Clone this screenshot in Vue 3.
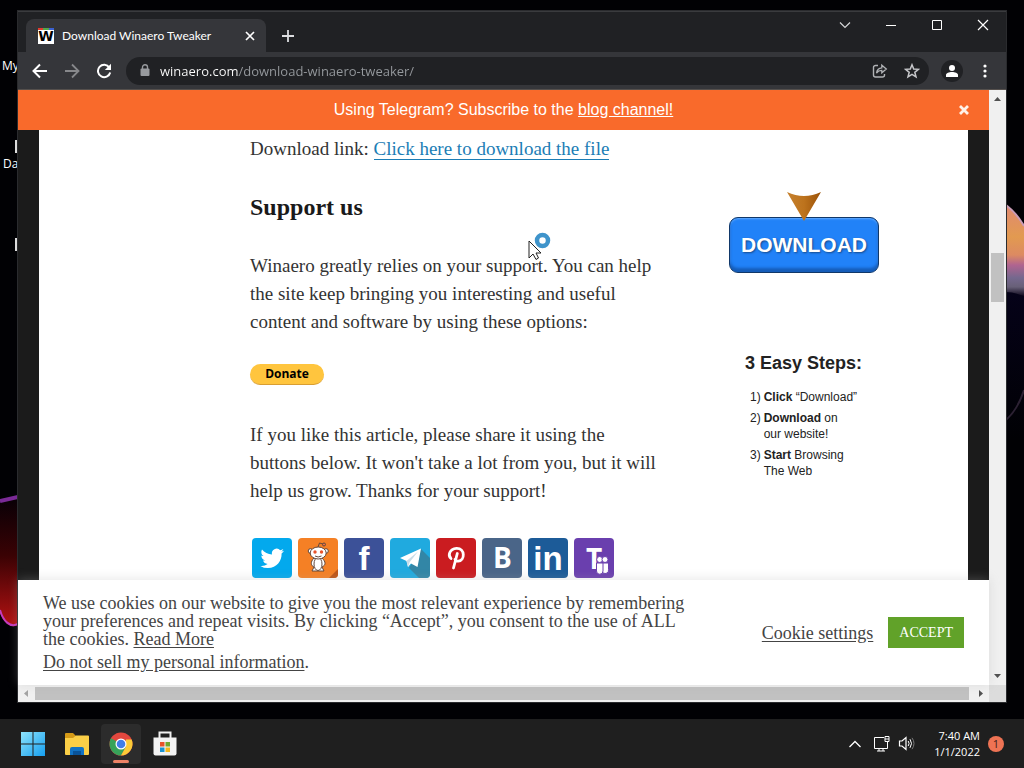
<script setup>
const lines = {
  support: [
    'Winaero greatly relies on your support. You can help',
    'the site keep bringing you interesting and useful',
    'content and software by using these options:'
  ],
  share: [
    'If you like this article, please share it using the',
    "buttons below. It won't take a lot from you, but it will",
    'help us grow. Thanks for your support!'
  ]
}
</script>

<template>
  <div class="desktop">
    <svg class="wall wall-left" width="18" height="140" viewBox="0 0 18 140" aria-hidden="true">
      <defs>
        <linearGradient id="ember" x1="0" y1="0" x2="0" y2="1">
          <stop offset="0" stop-color="#080006" />
          <stop offset="0.45" stop-color="#3a0204" />
          <stop offset="1" stop-color="#b51212" />
        </linearGradient>
      </defs>
      <path d="M0 8 18 6V133C11 137 4 131 0 121Z" fill="url(#ember)" />
      <path d="M0 9 18 5" stroke="#7a2a96" stroke-width="4" />
      <path d="M0 118C3 129 10 136 18 132" fill="none" stroke="#c23cc0" stroke-width="2" />
    </svg>
    <svg class="wall wall-right" width="18" height="240" viewBox="0 0 18 240" aria-hidden="true">
      <defs>
        <linearGradient id="petal" x1="0" y1="0" x2="0" y2="1">
          <stop offset="0" stop-color="#e08a72" />
          <stop offset="0.35" stop-color="#e29a50" />
          <stop offset="0.55" stop-color="#dc8a62" />
          <stop offset="0.66" stop-color="#b06490" />
          <stop offset="0.8" stop-color="#75688e" />
          <stop offset="0.9" stop-color="#686078" />
          <stop offset="1" stop-color="#100a1e" />
        </linearGradient>
        <linearGradient id="dusk" x1="0" y1="0" x2="0" y2="1">
          <stop offset="0" stop-color="#05021a" />
          <stop offset="1" stop-color="#010104" />
        </linearGradient>
      </defs>
      <path d="M0 80H18V240H0Z" fill="url(#dusk)" />
      <path d="M0 5C8 11 14 19 18 26V96C12 94 6 92 0 92Z" fill="url(#petal)" />
      <path d="M0 5C8 11 14 19 18 26" fill="none" stroke="#c99bb5" stroke-width="2" />
      <path d="M0 220C9 212 14 203 18 190" fill="none" stroke="#2c2133" stroke-width="2" />
    </svg>
    <span class="shortcut first">My</span>
    <i class="sliver upper"></i>
    <span class="shortcut second">Da</span>
    <i class="sliver lower"></i>

    <div class="workspace">
      <section class="window">
        <header class="tabstrip">
          <div class="tab">
            <svg width="16" height="16" viewBox="0 0 16 16" aria-hidden="true">
              <path d="M0 0H16V16H0Z" fill="#fff" />
              <path d="M0 0H5V2H0Z" fill="#e33b2e" /><path d="M5 0H11V2H5Z" fill="#52a74a" /><path d="M11 0H16V2H11Z" fill="#3b62d2" />
              <text x="8" y="13" text-anchor="middle" class="favicon-letter">W</text>
            </svg>
            <span class="tab-title">Download Winaero Tweaker</span>
            <button class="plain tab-close" aria-label="Close tab">
              <svg width="10" height="10" viewBox="0 0 10 10"><path d="M1 1 9 9M9 1 1 9" stroke="#fff" stroke-width="1.7" /></svg>
            </button>
          </div>
          <button class="plain new-tab" aria-label="New tab">
            <svg width="12" height="12" viewBox="0 0 12 12"><path d="M6 0V12M0 6H12" stroke="#dcdde0" stroke-width="1.8" /></svg>
          </button>
          <div class="captions">
            <button class="plain" aria-label="Search tabs"><svg width="12" height="12" viewBox="0 0 12 12"><path d="M1 3.500 6 8.500 11 3.500" fill="none" stroke="#d5d6d8" stroke-width="1.200" /></svg></button>
            <button class="plain" aria-label="Minimize"><svg width="12" height="12" viewBox="0 0 12 12"><path d="M1 6.500H11" stroke="#fff" /></svg></button>
            <button class="plain" aria-label="Maximize"><svg width="12" height="12" viewBox="0 0 12 12"><path d="M1.500 1.500H10.500V10.500H1.500Z" fill="none" stroke="#fff" /></svg></button>
            <button class="plain" aria-label="Close"><svg width="12" height="12" viewBox="0 0 12 12"><path d="M1 1 11 11M11 1 1 11" stroke="#fff" stroke-width="1.200" /></svg></button>
          </div>
        </header>

        <nav class="toolbar">
          <button class="plain nav" aria-label="Back"><svg width="16" height="16" viewBox="0 0 16 16"><path d="M15 8H2M8 1.500 1.500 8 8 14.500" fill="none" stroke="#fff" stroke-width="2" /></svg></button>
          <button class="plain nav" aria-label="Forward"><svg width="16" height="16" viewBox="0 0 16 16"><path d="M1 8H14M8 1.500 14.500 8 8 14.500" fill="none" stroke="#87888b" stroke-width="1.800" /></svg></button>
          <button class="plain nav" aria-label="Reload"><svg width="16" height="16" viewBox="0 0 16 16"><path d="M13.300 4.500A6.200 6.200 0 1 0 14.200 9.500" fill="none" stroke="#fff" stroke-width="2" /><path d="M15 .8V7H8.800Z" fill="#fff" /></svg></button>
          <div class="omnibox">
            <svg width="10" height="13" viewBox="0 0 10 13" aria-hidden="true"><rect x="0.500" y="4.500" width="9" height="7.500" rx="1" fill="#989a9e" /><path d="M2.500 5V3A2.500 2.200 0 0 1 7.500 3V5" fill="none" stroke="#989a9e" stroke-width="1.400" /></svg>
            <input class="url" aria-label="Address" value="winaero.com/download-winaero-tweaker/" />
            <button class="plain" aria-label="Share"><svg width="16" height="16" viewBox="0 0 16 16"><path d="M6 2.500H3.500A2 2 0 0 0 1.500 4.500V12A2 2 0 0 0 3.500 14H10.500A2 2 0 0 0 12.500 12V11" fill="none" stroke="#b0b2b5" stroke-width="1.400" /><path d="M4.500 10C5 6.800 7 5 9.800 4.800V2.200L14.300 6 9.800 9.800V7.300C7.500 7.200 6 8 4.500 10Z" fill="none" stroke="#b0b2b5" stroke-width="1.300" /></svg></button>
            <button class="plain" aria-label="Bookmark"><svg width="16" height="16" viewBox="0 0 16 16"><path d="M8 1.800 9.700 6 14.400 6.300 10.800 9.300 12 13.800 8 11.300 4 13.800 5.200 9.300 1.600 6.300 6.300 6Z" fill="none" stroke="#c5c6c9" stroke-width="1.500" /></svg></button>
          </div>
          <button class="plain avatar" aria-label="Profile"><svg width="14" height="14" viewBox="0 0 14 14"><circle cx="7" cy="4" r="3" fill="#fff" /><path d="M1 13V11C1 9 4 8 7 8S13 9 13 11V13Z" fill="#fff" /></svg></button>
          <button class="plain more" aria-label="Menu"><svg width="4" height="14" viewBox="0 0 4 14"><circle cx="2" cy="2" r="1.600" fill="#fff" /><circle cx="2" cy="7" r="1.600" fill="#fff" /><circle cx="2" cy="12" r="1.600" fill="#fff" /></svg></button>
        </nav>

        <div class="viewport">
          <div class="page">
            <div class="banner">
              <p>Using Telegram? Subscribe to the <a href="#">blog channel!</a></p>
              <button class="plain banner-close" aria-label="Dismiss"><svg width="10" height="10" viewBox="0 0 10 10"><path d="M1 1 9 9M9 1 1 9" stroke="#fff2e8" stroke-width="2.800" /></svg></button>
            </div>

            <main class="article">
              <div class="post">
                <p>Download link: <a href="#" class="download-link">Click here to download the file</a></p>
                <h2>Support us</h2>
                <p><span v-for="line in lines.support" :key="line" class="line">{{ line }}</span></p>
                <button class="donate">Donate</button>
                <p><span v-for="line in lines.share" :key="line" class="line">{{ line }}</span></p>
                <div class="socials">
                  <a href="#" class="twitter" aria-label="Twitter"><svg viewBox="0 0 40 40"><path d="M32 12.800c-.9.400-1.800.7-2.800.8 1-.6 1.700-1.500 2.100-2.600-.9.600-2 .9-3.100 1.200a4.800 4.800 0 0 0-8.200 4.400c-4-.2-7.600-2.100-10-5a4.800 4.800 0 0 0 1.500 6.500c-.8 0-1.500-.2-2.200-.6 0 2.400 1.700 4.400 3.900 4.900-.7.200-1.400.2-2.200.1.600 2 2.400 3.300 4.600 3.400a9.800 9.800 0 0 1-7.200 2 13.700 13.700 0 0 0 7.500 2.200c9 0 14-7.500 13.700-14.600.9-.7 1.800-1.600 2.400-2.700Z" fill="#fff" /></svg></a>
                  <a href="#" class="reddit" aria-label="Reddit"><svg viewBox="0 0 40 40"><path d="M40 31V36Q40 40 36 40H31Z" fill="#bd5518" /><g fill="#fff" stroke="#64483b" stroke-width="1"><circle cx="12.500" cy="13" r="2.300" /><circle cx="28" cy="13" r="2.300" /><path d="M16 20C12 24 13 28 16 29L14 33H26L24 29C28 27 28 24 24 20Z" /><ellipse cx="20" cy="26" rx="4" ry="6.500" /><ellipse cx="20.200" cy="15" rx="8" ry="6" /><path d="M20 9 21.500 5 25 6" fill="none" /><circle cx="26" cy="6.500" r="1.500" fill="#ef7043" /></g><circle cx="17" cy="14" r="1.700" fill="#e9542b" /><circle cx="23.500" cy="14" r="1.700" fill="#e9542b" /><path d="M17 18Q20 20 23.500 18" fill="none" stroke="#64483b" /></svg></a>
                  <a href="#" class="facebook" aria-label="Facebook"><svg viewBox="0 0 40 40"><text x="20" y="32" text-anchor="middle" class="brand-f">f</text></svg></a>
                  <a href="#" class="telegram" aria-label="Telegram"><svg viewBox="0 0 40 40"><path d="M31 11 40 20V36Q40 40 36 40H29L19 30Z" fill="#3286a6" /><path d="M31 10.500 10 20 16.500 23 18 29 21 25.500 27.500 29Z" fill="#fff" /><path d="M16.500 23 28 13.500 19.500 24.500 18 29Z" fill="#c8dce8" /></svg></a>
                  <a href="#" class="pinterest" aria-label="Pinterest"><svg viewBox="0 0 40 40"><path d="M15 20.500C11.500 17.500 13.500 10.800 20.500 10.300 29.500 10 29 22.800 22.300 23.200 20.500 23.300 19.400 22.300 19 21.200M21.300 15.500 17.500 30" fill="none" stroke="#fff" stroke-width="2.800" stroke-linecap="round" stroke-linejoin="round" /></svg></a>
                  <a href="#" class="vk" aria-label="VK"><svg viewBox="0 0 40 40"><text x="20.500" y="30" text-anchor="middle" class="brand-b">B</text></svg></a>
                  <a href="#" class="linkedin" aria-label="LinkedIn"><svg viewBox="0 0 40 40"><text x="20" y="32" text-anchor="middle" class="brand-in">in</text></svg></a>
                  <a href="#" class="teams" aria-label="Teams"><svg viewBox="0 0 40 40"><text x="20" y="31" text-anchor="middle" class="brand-t">T</text><g fill="#fff" stroke="#6a3fae" stroke-width="1"><path d="M28 25H34.500V31.500A3.200 3.200 0 0 1 28 33Z" /><path d="M22.500 25H29V33A3.200 3.200 0 0 1 22.500 33Z" /><circle cx="25.700" cy="21.500" r="3" /><circle cx="31" cy="21.500" r="3" /></g></svg></a>
                </div>
              </div>
              <aside class="ad">
                <div class="download-wrap">
                  <svg class="arrow" width="34" height="30" viewBox="0 0 34 30" aria-hidden="true"><defs><linearGradient id="amber"><stop offset="0" stop-color="#c6812d" /><stop offset="0.5" stop-color="#bd731d" /><stop offset="1" stop-color="#9b5208" /></linearGradient></defs><path d="M0 0Q17 8 34 0L17 29Z" fill="url(#amber)" /></svg>
                  <button class="download">DOWNLOAD</button>
                </div>
                <h3>3 Easy Steps:</h3>
                <ul>
                  <li><span>1)</span><div><b>Click</b> “Download”</div></li>
                  <li><span>2)</span><div><b>Download</b> on<br />our website!</div></li>
                  <li><span>3)</span><div><b>Start</b> Browsing<br />The Web</div></li>
                </ul>
              </aside>
            </main>

            <section class="cookies">
              <div class="cookie-copy">
                <p>
                  <span class="line">We use cookies on our website to give you the most relevant experience by remembering</span>
                  <span class="line">your preferences and repeat visits. By clicking “Accept”, you consent to the use of ALL</span>
                  <span class="line">the cookies. <a href="#">Read More</a></span>
                </p>
                <p><a href="#">Do not sell my personal information</a>.</p>
              </div>
              <a href="#" class="settings">Cookie settings</a>
              <button class="accept">ACCEPT</button>
            </section>
          </div>

          <div class="vbar">
            <svg width="17" height="17" viewBox="0 0 17 17"><path d="M5 11 8.500 7 12 11Z" fill="#505050" /></svg>
            <i class="vthumb"></i>
            <svg width="17" height="17" viewBox="0 0 17 17"><path d="M5 6 8.500 10 12 6Z" fill="#505050" /></svg>
          </div>
        </div>
        <div class="hbar">
          <svg width="17" height="17" viewBox="0 0 17 17"><path d="M10 5 6 8.500 10 12Z" fill="#a3a3a3" /></svg>
          <i class="hthumb"></i>
          <svg width="20" height="17" viewBox="0 0 20 17"><path d="M10 5 14 8.500 10 12Z" fill="#505050" /></svg>
          <i class="corner"></i>
        </div>
        <svg class="cursor" width="24" height="30" viewBox="0 0 24 30" aria-hidden="true"><circle cx="14.500" cy="8.500" r="5.500" fill="none" stroke="#3f94cb" stroke-width="4.500" /><path d="M1 9V26L5 22 8 27.500 10.500 26 8 21H13Z" fill="#fff" stroke="#222" /></svg>
      </section>
    </div>

    <footer class="taskbar">
      <button class="plain app" aria-label="Start"><svg width="24" height="24" viewBox="0 0 24 24"><defs><linearGradient id="win" x1="0" y1="0" x2="1" y2="1"><stop offset="0" stop-color="#8ee3fb" /><stop offset="1" stop-color="#159ff0" /></linearGradient></defs><path d="M0 0H11.500V11.500H0ZM12.500 0H24V11.500H12.500ZM0 12.500H11.500V24H0ZM12.500 12.500H24V24H12.500Z" fill="url(#win)" /></svg></button>
      <button class="plain app" aria-label="File Explorer"><svg width="26" height="24" viewBox="0 0 26 24"><path d="M1 2Q1 1 2 1H9L12 4V8H1Z" fill="#d59a17" /><path d="M1 6H9L12 3.500H24Q25 3.500 25 4.500V22Q25 23 24 23H2Q1 23 1 22Z" fill="#fbcf47" /><path d="M6 23V17Q6 15 8 15H18Q20 15 20 17V23Z" fill="#1273c4" /><path d="M9 19H17V23H9Z" fill="#095399" /></svg></button>
      <button class="plain app active" aria-label="Chrome"><svg width="24" height="24" viewBox="0 0 24 24"><circle cx="12" cy="12" r="11.500" fill="#e2473e" /><path d="M2 6.300A11.500 11.500 0 0 0 12 23.500L17 15 12 12Z" fill="#37a35a" /><path d="M22.600 7.500A11.500 11.500 0 0 1 12 23.500L17 14.500V7.500Z" fill="#fbcb37" /><circle cx="12" cy="12" r="5.500" fill="#fff" /><circle cx="12" cy="12" r="4.300" fill="#3f7ee8" /></svg></button>
      <button class="plain app" aria-label="Store"><svg width="24" height="25" viewBox="0 0 24 25"><path d="M6.500 7V1.500H17.500V7" fill="none" stroke="#f0f0f0" stroke-width="2" /><path d="M0.500 6.500H23.500V22.500Q23.500 24.500 21.500 24.500H2.500Q0.500 24.500 0.500 22.500Z" fill="#f3f3f3" /><path d="M7 11H11.500V15.500H7Z" fill="#e8532b" /><path d="M12.500 11H17V15.500H12.500Z" fill="#70a82f" /><path d="M7 16.500H11.500V21H7Z" fill="#1c94d2" /><path d="M12.500 16.500H17V21H12.500Z" fill="#f5b81c" /></svg></button>
      <div class="tray">
        <button class="plain" aria-label="Hidden icons"><svg width="14" height="14" viewBox="0 0 14 14"><path d="M1.500 10 7 4.500 12.500 10" fill="none" stroke="#fff" stroke-width="1.300" /></svg></button>
        <button class="plain network" aria-label="Network"><svg width="17" height="17" viewBox="0 0 17 17"><path d="M11 2.500H1.500V13.500H14.500V7M4 16H12M6 13.500V16M10 13.500V16M12 1.500H16V6.500H12ZM12 4H16" fill="none" stroke="#fff" /></svg></button>
        <button class="plain" aria-label="Volume"><svg width="17" height="17" viewBox="0 0 17 17"><path d="M1.500 6H4L8 2.500V14.500L4 11H1.500Z" fill="none" stroke="#fff" stroke-width="1.200" /><path d="M10.200 6Q12 8.500 10.200 11M12 4.200Q15 8.500 12 12.800" fill="none" stroke="#fff" /><path d="M14 2.800Q18 8.500 14 14.200" fill="none" stroke="#777" /></svg></button>
        <div class="clock"><span>7:40 AM</span><span>1/1/2022</span></div>
        <span class="badge">1</span>
      </div>
    </footer>
  </div>
</template>

<style>
html, body { margin: 0; background: #000; }
</style>

<style scoped>
.desktop { position: relative; display: flex; flex-direction: column; min-height: 100vh; overflow: hidden; background: #010104; color: #fff; font-family: "Open Sans", sans-serif; }
.desktop *, .desktop *::before { box-sizing: border-box; }
svg { display: block; flex: none; }
p, h2, h3, ul { margin: 0; padding: 0; }
.plain { display: flex; align-items: center; justify-content: center; padding: 0; border: 0; background: none; color: inherit; font: inherit; }
.line { display: block; white-space: nowrap; }

.wall { position: absolute; }
.wall-left { left: 0; top: 492px; }
.wall-right { right: 0; top: 200px; }
.shortcut { position: absolute; font-size: 12px; line-height: 16px; }
.first { left: 2px; top: 58px; }
.second { left: 3px; top: 156px; }
.sliver { position: absolute; left: 15px; width: 3px; height: 13px; background: #ddd; }
.upper { top: 140px; }
.lower { top: 238px; }

.workspace { position: relative; flex: 1; display: flex; padding: 11px 18px 17px; }
.window { position: relative; flex: 1; min-width: 0; display: flex; flex-direction: column; background: #202124; box-shadow: 0 0 0 1px #2a2b2e; }

.tabstrip { display: flex; height: 41px; padding-left: 8px; border-top: 1px solid #3a3b3e; }
.tab { display: flex; align-items: center; gap: 8px; width: 240px; margin-top: 7px; padding: 0 11px 0 12px; border-radius: 8px 8px 0 0; background: #35363a; }
.tab-title { flex: 1; font: 12px/16px Lato, sans-serif; white-space: nowrap; }
.tab-close { width: 10px; }
.favicon-letter { font: bold 14px "DejaVu Sans", sans-serif; fill: #000; }
.new-tab { width: 44px; margin-top: 8px; }
.captions { display: flex; height: 26px; margin-left: auto; }
.captions button { width: 46px; }

.toolbar { display: flex; align-items: center; height: 38px; padding: 0 14px 0 6px; background: #35363a; border-bottom: 1px solid #55504d; }
.nav { width: 32px; height: 32px; }
.omnibox { flex: 1; display: flex; align-items: center; gap: 16px; height: 28px; margin: 0 12px 0 6px; padding: 0 9px 0 14px; border-radius: 14px; background: #202124; }
.omnibox > svg { margin-right: -6px; }
.url { flex: 1; min-width: 0; padding: 0; border: 0; outline: 0; background: linear-gradient(to right, #fff 79px, #969a9e 79px); background-clip: text; color: transparent; font: 13px/20px "Open Sans", sans-serif; }
.avatar { width: 22px; height: 22px; margin-right: 14px; border-radius: 50%; background: #202124; }
.more { width: 15px; height: 22px; }

.viewport { flex: 1; display: flex; }
.page { flex: 1; min-width: 0; display: flex; flex-direction: column; background: #1b1b1b; }
.banner { display: flex; align-items: center; height: 40px; padding: 0 20px 0 30px; background: #f96a2b; font: 16px/20px "Liberation Sans", sans-serif; }
.banner p { flex: 1; text-align: center; }
.banner a { color: inherit; }
.banner-close { width: 10px; height: 20px; }

.article { flex: 1; display: flex; justify-content: space-between; gap: 24px; margin: 0 21px; padding: 5px 89px 2px 211px; background: #fff; color: #333; font: 19px/28px "Liberation Serif", serif; }
.download-link { color: #1b7db5; text-decoration: none; border-bottom: 1px solid #1b7db5; }
.post { display: flex; flex-direction: column; align-items: flex-start; }
h2 { margin: 30px 0 31px; color: #1a1a1a; font: bold 24px/28px "Liberation Serif", serif; }
.donate { width: 74px; height: 21px; margin: 28px 0 36px; padding: 0; border: 0; border-bottom: 1px solid #d99e32; border-radius: 11px; background: #ffc53e; color: #000; font: bold 12px/20px "Open Sans", sans-serif; }
.socials { display: flex; gap: 6px; margin: 33px 0 0 2px; }
.socials a { width: 40px; height: 40px; border-radius: 4px; }
.twitter { background: #03a9ed; }
.reddit { background: #f58025; }
.facebook { background: #3c5198; }
.telegram { background: #20aadf; }
.pinterest { background: #ca1c20; }
.vk { background: #4a6588; }
.linkedin { background: #1c5b98; }
.teams { background: #6a3fae; }
.socials text { fill: #fff; }
.brand-f { font: bold 33px "Liberation Sans", sans-serif; }
.brand-b { font: bold 28px "Open Sans", sans-serif; }
.brand-in { font: bold 33px "Liberation Sans", sans-serif; }
.brand-t { font: bold 28px "Open Sans", sans-serif; }

.ad { width: 150px; padding-top: 82px; color: #222; font: 12px/16px "Liberation Sans", sans-serif; }
.download-wrap { position: relative; }
.arrow { position: absolute; left: 58px; top: -25px; }
.download { width: 100%; height: 56px; padding: 0; border: 1px solid #113869; border-radius: 9px; background: #2182f8; box-shadow: inset 0 -4px 3px #155cb8, inset 0 1px 2px #67adff; color: #fff; font: bold 21px/24px "Liberation Sans", sans-serif; text-shadow: 1px 1px 2px #174b8b; }
h3 { margin: 78px 0 14px 16px; font: bold 18px/24px "Liberation Sans", sans-serif; }
ul { display: flex; flex-direction: column; gap: 5px; margin-left: 21px; list-style: none; }
li { display: flex; gap: 3px; }

.cookies { position: relative; display: flex; align-items: center; gap: 15px; height: 105px; padding: 0 25px; background: #fff; box-shadow: 0 -1px 10px rgba(172, 171, 171, 0.3); color: #444; font: 18px/18px "Liberation Serif", serif; }
.cookies a { color: inherit; text-underline-offset: 2px; }
.cookie-copy { flex: 1; }
.cookie-copy p + p { margin-top: 5px; }
.accept { height: 31px; padding: 0 11px; border: 0; background: #61a229; color: #fff; font: 14px/18px "Liberation Serif", serif; }

.vbar { display: flex; flex-direction: column; width: 17px; background: #f0f0f0; }
.vthumb { flex: none; width: 13px; height: 49px; margin: 146px 2px auto; background: #c1c1c1; }
.hbar { display: flex; align-items: center; height: 17px; background: #f0f0f0; }
.hthumb { flex: 1; height: 13px; background: #c1c1c1; }
.corner { width: 17px; height: 17px; background: #dcdcdc; }
.cursor { position: absolute; left: 510px; top: 221px; }

.taskbar { display: flex; align-items: center; height: 49px; padding: 0 20px 0 13px; background: #1f1f1f; }
.app { position: relative; width: 40px; height: 40px; margin-right: 4px; border-radius: 4px; }
.active { background: #2c2c2c; }
.active::before { content: ""; position: absolute; bottom: 1px; width: 16px; height: 3px; border-radius: 2px; background: #ee8266; }
.tray { display: flex; align-items: center; gap: 8px; margin-left: auto; }
.network { margin-left: 3px; }
.clock { display: flex; flex-direction: column; align-items: flex-end; margin-left: 11px; font-size: 11px; line-height: 16px; }
.badge { width: 16px; height: 16px; border-radius: 50%; background: #ee7354; color: #40211b; font-size: 11px; line-height: 16px; text-align: center; }
</style>
